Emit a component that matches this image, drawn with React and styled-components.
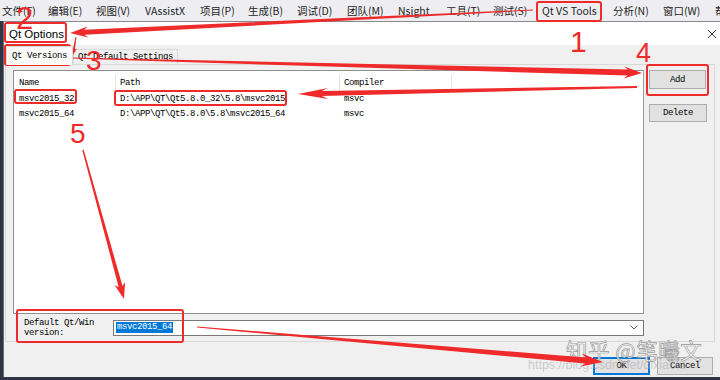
import React from "react";
import styled, { createGlobalStyle } from "styled-components";

const GlobalStyle = createGlobalStyle`
  html, body {
    margin: 0;
    padding: 0;
    width: 720px;
    height: 380px;
    overflow: hidden;
    background: #2e3446;
  }
  * { box-sizing: border-box; }
`;

const Screen = styled.div`
  position: relative;
  width: 720px;
  height: 380px;
  display: flex;
  flex-direction: column;
  overflow: hidden;
  background: #2e3446;
`;

const MenuBar = styled.div`
  height: 21px;
  flex: none;
  display: flex;
  align-items: center;
  padding-left: 2px;
  background: #eeeef2;
  font-family: "Noto Sans CJK SC", "Noto Sans", sans-serif;
  font-size: 10.5px;
  color: #1e1e1e;
  white-space: nowrap;
  overflow: hidden;
`;

const MenuItem = styled.div`
  flex: none;
  width: ${(p) => p.$w}px;
  line-height: 21px;
`;

const Workspace = styled.div`
  flex: 1;
  display: flex;
  min-height: 0;
`;

const SideStrip = styled.div`
  width: 3px;
  flex: none;
  background: #2e3446;
`;

const Dialog = styled.div`
  flex: 1;
  display: flex;
  flex-direction: column;
  border-left: 1px solid #6d6d6d;
  border-top: 1px solid #8a8a8a;
  background: #f0f0f0;
`;

const TitleBar = styled.div`
  height: 23px;
  flex: none;
  display: flex;
  align-items: center;
  justify-content: space-between;
  padding: 0 2px 0 5px;
  background: #ffffff;
`;

const Title = styled.span`
  font-family: "Liberation Sans", Arial, sans-serif;
  font-size: 11.5px;
  color: #000;
`;

const CloseButton = styled.div`
  width: 12px;
  height: 12px;
  display: flex;
  align-items: center;
  justify-content: center;
`;

const DialogBody = styled.div`
  flex: 1;
  display: flex;
  flex-direction: column;
  padding: 1px 5px 1px 1px;
  font-family: "Liberation Mono", "Courier New", monospace;
  font-size: 9px;
  letter-spacing: -0.4px;
  color: #000;
`;

const TabStrip = styled.div`
  height: 18px;
  flex: none;
  display: flex;
  align-items: flex-end;
  padding-left: 1px;
`;

const Tab = styled.div`
  height: ${(p) => (p.$active ? 19 : 15)}px;
  padding: 0 ${(p) => (p.$active ? 5 : 4)}px;
  display: flex;
  align-items: center;
  background: ${(p) => (p.$active ? "#fcfcfc" : "#f0f0f0")};
  border: 1px solid #d9d9d9;
  border-bottom: none;
  margin-bottom: ${(p) => (p.$active ? -1 : 0)}px;
  position: relative;
  z-index: ${(p) => (p.$active ? 1 : 0)};
  white-space: nowrap;
`;

const TabPane = styled.div`
  height: 278px;
  flex: none;
  display: flex;
  flex-direction: column;
  border: 1px solid #d9d9d9;
  background: #f0f0f0;
  padding-top: 5px;
`;

const PaneMain = styled.div`
  height: 244px;
  flex: none;
  display: flex;
`;

const ListBox = styled.div`
  flex: 1;
  margin-left: 7px;
  background: #ffffff;
  border: 1px solid #8f8f8f;
  border-right-color: #9a9a9a;
  display: flex;
  flex-direction: column;
  padding-top: 1px;
`;

const ListGrid = styled.div`
  display: grid;
  grid-template-columns: 102px 224px 112px 1fr;
  height: ${(p) => (p.$header ? 19 : 15)}px;
  padding-top: ${(p) => (p.$header ? 2 : 0)}px;
  align-items: center;
`;

const Cell = styled.div`
  height: 100%;
  display: flex;
  align-items: center;
  padding-left: ${(p) => (p.$first ? 5 : 4)}px;
  border-right: ${(p) => (p.$divider ? "1px solid #e3e3e3" : "none")};
  white-space: nowrap;
`;

const ButtonColumn = styled.div`
  width: 70px;
  flex: none;
  display: flex;
  flex-direction: column;
  align-items: flex-start;
  gap: 15px;
  padding-left: 5px;
`;

const Button = styled.div`
  width: ${(p) => p.$w || 57}px;
  height: ${(p) => p.$h || 18}px;
  display: flex;
  align-items: center;
  justify-content: center;
  background: #e1e1e1;
  border: 1px solid ${(p) => (p.$primary ? "#0078d7" : "#adadad")};
  box-shadow: ${(p) => (p.$primary ? "inset 0 0 0 1px #0078d7" : "none")};
`;

const DefaultRow = styled.div`
  flex: 1;
  display: flex;
  align-items: center;
  padding-left: 18px;
  padding-right: 70px;
`;

const DefaultLabel = styled.div`
  width: 89px;
  flex: none;
  line-height: 10px;
`;

const Combo = styled.div`
  flex: 1;
  height: 16px;
  display: flex;
  align-items: center;
  justify-content: space-between;
  background: #ffffff;
  border: 1px solid #7a7a7a;
  padding: 0 5px 0 2px;
`;

const Selected = styled.span`
  background: #0078d7;
  color: #ffffff;
  line-height: 11px;
  padding: 0 1px;
`;

const DialogButtons = styled.div`
  flex: 1;
  display: flex;
  justify-content: flex-end;
  align-items: flex-start;
  gap: 7px;
  padding-top: 15px;
  padding-right: 2px;
`;

const StatusStrip = styled.div`
  height: 3px;
  flex: none;
  background: #2e3446;
`;

const Watermark = styled.div`
  position: absolute;
  left: 566px;
  top: 334px;
  font-family: "Noto Sans CJK SC", sans-serif;
  font-size: 21.5px;
  color: rgba(255, 255, 255, 0.92);
  -webkit-text-stroke: 0.7px #999999;
  letter-spacing: 0.5px;
  white-space: nowrap;
  pointer-events: none;
`;

const SourceUrl = styled.div`
  position: absolute;
  left: 528px;
  top: 358px;
  font-family: "Liberation Sans", Arial, sans-serif;
  font-size: 12.5px;
  color: rgba(170, 170, 170, 0.55);
  white-space: nowrap;
  pointer-events: none;
`;

const Annotations = styled.svg`
  position: absolute;
  left: 0;
  top: 0;
  width: 720px;
  height: 380px;
  pointer-events: none;
`;

const Number = styled.text`
  font-family: "Liberation Sans", Arial, sans-serif;
  fill: #ee2a2a;
`;

const RED = "#ee2a2a";

function arrowPoints(x1, y1, x2, y2, wTail, wShaft, headLen, headW) {
  const dx = x2 - x1;
  const dy = y2 - y1;
  const len = Math.hypot(dx, dy);
  const ux = dx / len;
  const uy = dy / len;
  const nx = -uy;
  const ny = ux;
  const bx = x2 - ux * headLen;
  const by = y2 - uy * headLen;
  const bx2 = x2 - ux * headLen * 0.8;
  const by2 = y2 - uy * headLen * 0.8;
  const pts = [
    [x1 + (nx * wTail) / 2, y1 + (ny * wTail) / 2],
    [bx2 + (nx * wShaft) / 2, by2 + (ny * wShaft) / 2],
    [bx + (nx * headW) / 2, by + (ny * headW) / 2],
    [x2, y2],
    [bx - (nx * headW) / 2, by - (ny * headW) / 2],
    [bx2 - (nx * wShaft) / 2, by2 - (ny * wShaft) / 2],
    [x1 - (nx * wTail) / 2, y1 - (ny * wTail) / 2],
  ];
  return pts.map((p) => p.map((v) => v.toFixed(1)).join(",")).join(" ");
}

const arrows = [
  [533, 10, 70, 33, 1, 5, 18, 11],
  [76, 37, 73, 55, 1, 2, 7, 6],
  [70, 58, 642, 73, 1, 6, 18, 12],
  [637, 87, 298, 94, 2, 5, 30, 11],
  [83, 150, 124, 299, 1.5, 4, 16, 11],
  [197, 327, 603, 362, 1, 6, 22, 13],
];

const boxes = [
  [537, 2, 64, 19],
  [5, 23, 61, 19],
  [5, 45, 65, 20],
  [647, 65, 61, 30],
  [15, 90, 61, 13],
  [115, 91, 171, 14],
  [17, 310, 166, 32],
];

const numbers = [
  ["1", 570, 52, 30],
  ["2", 16, 29, 31],
  ["3", 86, 70, 28],
  ["4", 636, 62, 27],
  ["5", 70, 143, 28],
];

const menu = [
  ["文件(F)", 46],
  ["编辑(E)", 48],
  ["视图(V)", 49],
  ["VAssistX", 55],
  ["项目(P)", 48],
  ["生成(B)", 49],
  ["调试(D)", 50],
  ["团队(M)", 51],
  ["Nsight", 48],
  ["工具(T)", 47],
  ["测试(S)", 49],
  ["Qt VS Tools", 71],
  ["分析(N)", 50],
  ["窗口(W)", 52],
  ["帮", 20],
];

const versions = [
  ["msvc2015_32", "D:\\APP\\QT\\Qt5.8.0_32\\5.8\\msvc2015", "msvc"],
  ["msvc2015_64", "D:\\APP\\QT\\Qt5.8.0\\5.8\\msvc2015_64", "msvc"],
];

export default function App() {
  return (
    <>
      <GlobalStyle />
      <Screen>
        <MenuBar>
          {menu.map(([label, w]) => (
            <MenuItem key={label} $w={w}>
              {label}
            </MenuItem>
          ))}
        </MenuBar>
        <Workspace>
          <SideStrip />
          <Dialog>
            <TitleBar>
              <Title>Qt Options</Title>
              <CloseButton>
                <svg width="10" height="10" viewBox="0 0 10 10">
                  <path d="M1 1 L9 9 M9 1 L1 9" stroke="#333" strokeWidth="1" fill="none" />
                </svg>
              </CloseButton>
            </TitleBar>
            <DialogBody>
              <TabStrip>
                <Tab $active>Qt Versions</Tab>
                <Tab>Qt Default Settings</Tab>
              </TabStrip>
              <TabPane>
                <PaneMain>
                  <ListBox>
                    <ListGrid $header>
                      <Cell $first $divider>Name</Cell>
                      <Cell $divider>Path</Cell>
                      <Cell $divider>Compiler</Cell>
                      <Cell />
                    </ListGrid>
                    {versions.map(([name, path, comp]) => (
                      <ListGrid key={name}>
                        <Cell $first>{name}</Cell>
                        <Cell>{path}</Cell>
                        <Cell>{comp}</Cell>
                        <Cell />
                      </ListGrid>
                    ))}
                  </ListBox>
                  <ButtonColumn>
                    <Button $h={19}>Add</Button>
                    <Button $w={58}>Delete</Button>
                  </ButtonColumn>
                </PaneMain>
                <DefaultRow>
                  <DefaultLabel>
                    Default Qt/Win
                    <br />
                    version:
                  </DefaultLabel>
                  <Combo>
                    <Selected>msvc2015_64</Selected>
                    <svg width="8" height="5" viewBox="0 0 8 5">
                      <path d="M0.5 0.5 L4 4 L7.5 0.5" stroke="#555" strokeWidth="1" fill="none" />
                    </svg>
                  </Combo>
                </DefaultRow>
              </TabPane>
              <DialogButtons>
                <Button $primary $w={57}>OK</Button>
                <Button $w={56}>Cancel</Button>
              </DialogButtons>
            </DialogBody>
          </Dialog>
        </Workspace>
        <StatusStrip />
        <Watermark>知乎 @笔曦文</Watermark>
        <SourceUrl>https://blog.csdn.net/dixiaolu</SourceUrl>
        <Annotations viewBox="0 0 720 380">
          {boxes.map(([x, y, w, h], i) => (
            <rect key={i} x={x} y={y} width={w} height={h} rx="2" fill="none" stroke={RED} strokeWidth="2" />
          ))}
          {arrows.map((a, i) => (
            <polygon key={i} points={arrowPoints(...a)} fill={RED} />
          ))}
          {numbers.map(([t, x, y, s]) => (
            <Number key={t} x={x} y={y} fontSize={s}>
              {t}
            </Number>
          ))}
        </Annotations>
      </Screen>
    </>
  );
}
